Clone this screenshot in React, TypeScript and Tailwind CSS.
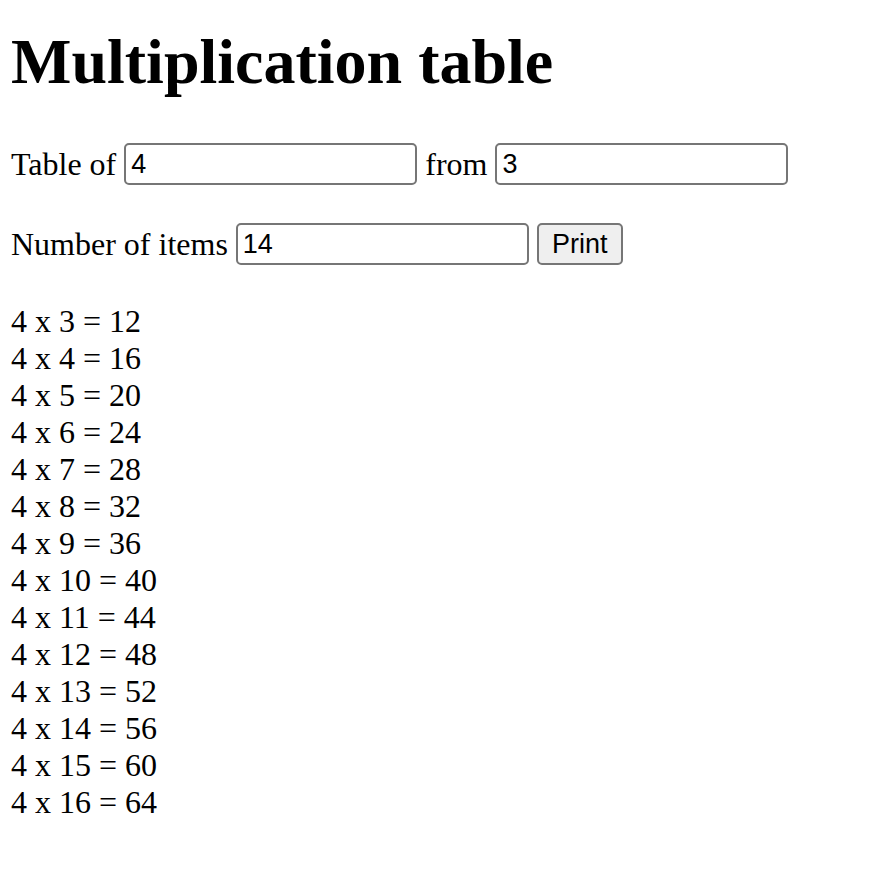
import { useState } from "react";

const App = () => {
    const [table, setTable] = useState("4");
    const [from, setFrom] = useState("3");
    const [count, setCount] = useState("14");
    const [printed, setPrinted] = useState({ table: 4, from: 3, count: 14 });

    const rows = Array.from({ length: printed.count }, (_, i) => printed.from + i);

    return (
        <div className="min-h-screen bg-white pl-[11px] pt-[25px] font-['Liberation_Serif',serif] text-[32px] leading-[37px] text-black">
            <h1 className="text-[64px] font-bold leading-[74px]">Multiplication table</h1>

            <div className="mt-[44px] flex items-center gap-2">
                <span>Table of</span>
                <input
                    value={table}
                    onChange={(e) => setTable(e.target.value)}
                    className="h-[42px] w-[293px] shrink-0 rounded-[5px] border-2 border-[#767676] px-[5px] font-['Liberation_Sans',Arial,sans-serif] text-[27px] outline-none"
                />
                <span>from</span>
                <input
                    value={from}
                    onChange={(e) => setFrom(e.target.value)}
                    className="h-[42px] w-[293px] shrink-0 rounded-[5px] border-2 border-[#767676] px-[5px] font-['Liberation_Sans',Arial,sans-serif] text-[27px] outline-none"
                />
            </div>

            <div className="mt-[38px] flex items-center gap-2">
                <span>Number of items</span>
                <input
                    value={count}
                    onChange={(e) => setCount(e.target.value)}
                    className="h-[42px] w-[293px] shrink-0 rounded-[5px] border-2 border-[#767676] px-[5px] font-['Liberation_Sans',Arial,sans-serif] text-[27px] outline-none"
                />
                <button
                    onClick={() =>
                        setPrinted({
                            table: Number(table) || 0,
                            from: Number(from) || 0,
                            count: Number(count) || 0,
                        })
                    }
                    className="h-[42px] w-[86px] shrink-0 rounded-[5px] border-2 border-[#767676] bg-[#efefef] font-['Liberation_Sans',Arial,sans-serif] text-[27px] leading-none"
                >
                    Print
                </button>
            </div>

            <div className="mt-[38px]">
                {rows.map((n) => (
                    <div key={n}>
                        {printed.table} x {n} = {printed.table * n}
                    </div>
                ))}
            </div>
        </div>
    );
};

export default App;
